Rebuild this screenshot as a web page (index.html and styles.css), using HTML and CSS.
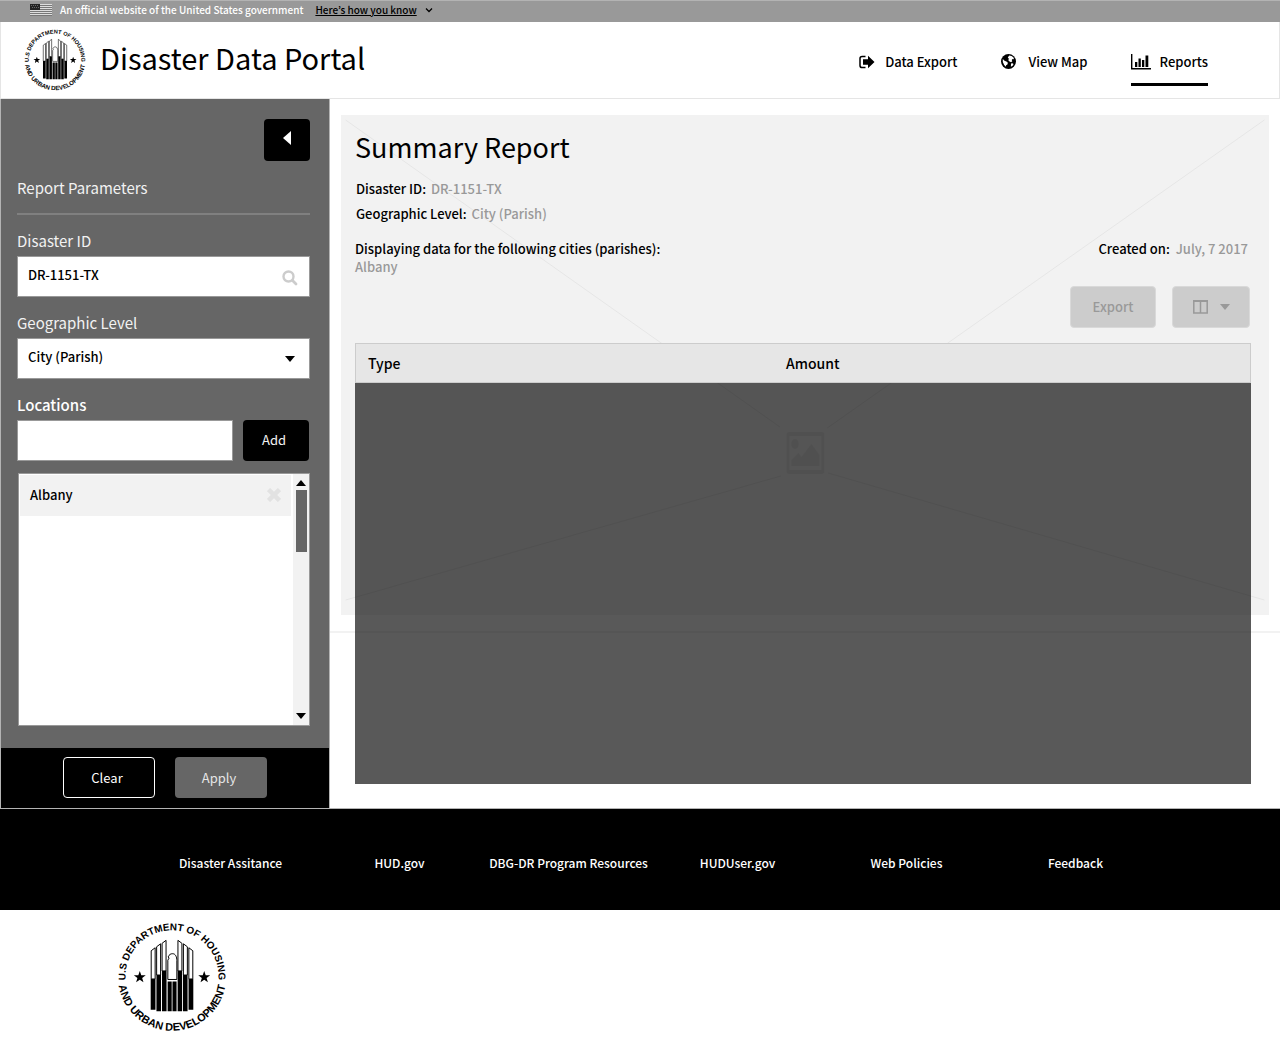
FILE: index.html
```html
<!DOCTYPE html>
<html lang="en">
<head>
<meta charset="utf-8">
<meta name="viewport" content="width=device-width, initial-scale=1">
<title>Disaster Data Portal</title>
<link rel="stylesheet" href="styles.css">
</head>
<body>
<svg class="defs" aria-hidden="true">
  <defs>
    <path id="arc-top" d="M17.500 82.500A47 47 0 1 1 93.500 82.500"/>
    <path id="arc-bottom" d="M13.500 20A54.500 54.500 0 1 0 97.500 20"/>
    <symbol id="seal" viewBox="0 0 111 110">
      <g class="seal-text">
        <text><textPath href="#arc-top" startOffset="50%">U.S DEPARTMENT OF HOUSING</textPath></text>
        <text class="lower"><textPath href="#arc-bottom" startOffset="50%">AND URBAN DEVELOPMENT</textPath></text>
      </g>
      <g fill="#fff" stroke="#000" stroke-width="1">
        <path d="M34.500 57V28.500l4-3V57zM40 53V24.500l4-3V53zM45.500 49V21l4-3V49z"/>
        <path d="M76.500 57V28.500l-4-3V57zM71 53V24.500l-4-3V53zM65.500 49V21l-4-3V49z"/>
        <path d="M51.300 57.500V38l1.200-2-.8-1.300c1-2.500 2.500-3.200 4.500-3.200 2.700 0 4.200 3 4.200 7v19z"/>
      </g>
      <path d="M34 57h4.800v31H34zM39.800 53h4.600v36.500h-4.600zM45.400 48.800h4.600v40.700h-4.600zM51.100 59.500h4.100v30h-4.100zM56 59.500h4.100v30H56zM61.200 48.800h4.500v40.700h-4.500zM66.600 53h4.600v36.500h-4.600zM72.200 57H77v31h-4.800z"/>
      <path d="M23 49l1.500 4.200 4.500.1-3.600 2.700 1.300 4.300L23 57.800l-3.700 2.500 1.300-4.300-3.600-2.700 4.500-.1zM88 49l1.500 4.200 4.500.1-3.600 2.700 1.300 4.300-3.700-2.500-3.700 2.500 1.300-4.300-3.600-2.700 4.500-.1z"/>
    </symbol>
  </defs>
</svg>

<div class="banner">
  <svg class="flag" viewBox="0 0 22 12" aria-hidden="true">
    <path fill="#ddd" d="M0 0h22v12H0z"/>
    <path fill="#777" d="M0 1h22v1H0zM0 3h22v1H0zM0 5h22v1H0zM0 7h22v1H0zM0 9h22v1H0zM0 11h22v1H0z"/>
    <path fill="#222" d="M0 0h10v6H0z"/>
    <path stroke="#666" stroke-dasharray="1 1" d="M1 1.500h8M2 3.500h8"/>
  </svg>
  <span>An official website of the United States government</span>
  <a href="#know">Here’s how you know</a>
  <svg class="chev" viewBox="0 0 8 6" aria-hidden="true"><path fill="none" stroke="#000" stroke-width="1.300" d="M1 1.500l3 3 3-3"/></svg>
</div>

<header class="header">
  <a class="brand" href="#home">
    <svg class="seal-small" role="img" aria-label="HUD seal"><use href="#seal"/></svg>
    <span>Disaster Data Portal</span>
  </a>
  <nav class="nav" aria-label="Main">
    <a href="#export">
      <svg width="17" height="16" viewBox="0 0 17 16" aria-hidden="true"><path fill="none" stroke="#000" stroke-width="1.500" d="M6.500 2.500H3.200C1.800 2.500 1 3.300 1 4.600v6.800c0 1.300.8 2.100 2.200 2.100h3.300"/><path d="M4 5.200h5V1.700L15.500 8 9 14.300v-3.500H4z"/></svg>
      Data Export</a>
    <a href="#map">
      <svg width="19" height="16" viewBox="0 0 19 16" aria-hidden="true"><circle cx="7.500" cy="7.500" r="7.500"/><path fill="#fff" d="M8.200 1.500l2.300.5 1.800 1.300.8 2-1.500-.3-.9 1 .6 1.300-1.200.9-1.600-.7-1.200-1.200.6-1.600-1.100-1.200zM1.800 5l1.700 1.800 1.900.6 1.500 1.400-.5 1.600-1.300.8-.2 1.500-1.700-1.600L1.800 8zM10 9.500l1.500-.3 1 .8-.6 1.500-2 1.200z"/></svg>
      View Map</a>
    <a class="current" href="#reports" aria-current="page">
      <svg width="20" height="16" viewBox="0 0 20 16" aria-hidden="true"><path d="M0 0h1.400v14H20v1.400H0zM4 8h2.300v5H4zM7.500 4.500h2.300V13H7.500zM11 6h2.300v7H11zM14.500 1.500h2.800V13h-2.800z"/></svg>
      Reports</a>
  </nav>
</header>

<main class="main">
  <form class="sidebar">
    <div class="params">
      <button class="collapse" type="button" aria-label="Collapse panel"><svg viewBox="0 0 8 14" width="8" height="14"><path fill="#fff" d="M8 0v14L0 7z"/></svg></button>
      <h2>Report Parameters</h2>
      <label for="disaster">Disaster ID</label>
      <div class="field">
        <input id="disaster" type="text" value="DR-1151-TX">
        <svg class="search" viewBox="0 0 16 16" aria-hidden="true"><circle cx="6.500" cy="6.500" r="5" fill="none" stroke="#ccc" stroke-width="2.400"/><path stroke="#ccc" stroke-width="2.800" stroke-linecap="round" d="M10.500 10.500l3.500 3.500"/></svg>
      </div>
      <label for="level">Geographic Level</label>
      <div class="field">
        <select id="level"><option>City (Parish)</option></select>
        <svg class="caret" viewBox="0 0 10 6" aria-hidden="true"><path d="M0 0h10L5 6z"/></svg>
      </div>
      <label class="strong" for="location">Locations</label>
      <div class="add-row">
        <input id="location" type="text">
        <button type="button" class="add">Add</button>
      </div>
      <div class="list">
        <ul>
          <li>Albany
            <button type="button" aria-label="Remove Albany"><svg viewBox="0 0 14 14" width="14" height="14"><path stroke="#e2e2e2" stroke-width="4.500" d="M1.500 1.500l11 11M12.500 1.500l-11 11"/></svg></button>
          </li>
        </ul>
        <div class="scroll" aria-hidden="true">
          <svg viewBox="0 0 10 6"><path d="M0 6h10L5 0z"/></svg>
          <div class="thumb"></div>
          <svg viewBox="0 0 10 6"><path d="M0 0h10L5 6z"/></svg>
        </div>
      </div>
    </div>
    <div class="actions">
      <button type="reset" class="clear">Clear</button>
      <button type="button" class="apply">Apply</button>
    </div>
  </form>

  <section class="report">
    <div class="backdrop" aria-hidden="true">
      <svg>
        <g stroke="#e6e6e6" stroke-width="1">
          <line x1=".5%" y1="1%" x2="47.300%" y2="62.400%"/>
          <line x1="99.500%" y1="1%" x2="52.400%" y2="62.600%"/>
          <line x1=".5%" y1="97%" x2="47.400%" y2="72.200%"/>
          <line x1="99.500%" y1="97%" x2="52.500%" y2="71.600%"/>
        </g>
        <svg x="48%" y="317" width="38" height="42" viewBox="0 0 38 42">
          <path fill="#e6e6e6" fill-rule="evenodd" d="M3 0h32q3 0 3 3v36q0 3-3 3H3q-3 0-3-3V3q0-3 3-3zM3 4v34h32V4z"/>
          <ellipse fill="#e6e6e6" cx="8.500" cy="12" rx="3.700" ry="5"/>
          <path fill="#e6e6e6" d="M5 34v-6l7-7 3 4 10-13 8 11v11z"/>
        </svg>
      </svg>
    </div>
    <div class="content">
      <h1>Summary Report</h1>
      <p class="meta">Disaster ID: <span>DR-1151-TX</span></p>
      <p class="meta">Geographic Level: <span>City (Parish)</span></p>
      <div class="info">
        <p>Displaying data for the following cities (parishes):<br><span>Albany</span></p>
        <p class="created">Created on: <span>July, 7 2017</span></p>
      </div>
      <div class="tools">
        <button type="button">Export</button>
        <button type="button" class="columns" aria-label="Choose columns">
          <svg viewBox="0 0 15 14" width="15" height="14"><path fill="none" stroke="#999" stroke-width="1.500" d="M.8 1h13.400v12H.8zM7.500 1v12"/><path stroke="#999" stroke-width="2" d="M0 1h15"/></svg>
          <svg viewBox="0 0 10 6" width="10" height="6"><path fill="#999" d="M0 0h10L5 6z"/></svg>
        </button>
      </div>
      <table>
        <thead><tr><th scope="col">Type</th><th scope="col">Amount</th></tr></thead>
        <tbody><tr><td></td><td></td></tr></tbody>
      </table>
    </div>
  </section>
</main>

<footer>
  <nav class="links" aria-label="Footer">
    <a href="#assistance">Disaster Assitance</a>
    <a href="#hud">HUD.gov</a>
    <a href="#resources">DBG-DR Program Resources</a>
    <a href="#huduser">HUDUser.gov</a>
    <a href="#policies">Web Policies</a>
    <a href="#feedback">Feedback</a>
  </nav>
  <div class="foot">
    <svg class="seal-large" role="img" aria-label="HUD seal"><use href="#seal"/></svg>
  </div>
</footer>
</body>
</html>
```
FILE: styles.css
```css
* { box-sizing: border-box; }
body, h1, h2, p, ul { margin: 0; padding: 0; }
body {
  background: #fff;
  color: #000;
  font: 500 13px/18px "Noto Sans CJK JP", "Noto Sans", sans-serif;
}
a { color: inherit; text-decoration: none; }
button, input, select { font: inherit; color: inherit; border-radius: 0; margin: 0; }
button { display: flex; align-items: center; justify-content: center; border: 0; border-radius: 4px; padding: 0; }
.defs { position: absolute; width: 0; height: 0; }
.seal-text { font: bold 10px "Liberation Sans", sans-serif; text-anchor: middle; }
.seal-text .lower { font-size: 11px; }

.banner {
  display: flex;
  align-items: center;
  height: 22px;
  padding: 0 30px 4px;
  background: #999;
  border-top: 1px solid #b3b3b3;
  color: #fff;
  font-size: 10px;
}
.flag { width: 22px; height: 12px; margin-right: 8px; }
.banner a { margin: 0 8px 0 12px; color: #000; text-decoration: underline; }
.chev { width: 8px; height: 6px; }

.header {
  display: flex;
  justify-content: space-between;
  align-items: center;
  height: 77px;
  padding: 0 71px 0 23px;
  border: 1px solid #e5e5e5;
  border-top: 0;
}
.brand { display: flex; align-items: center; gap: 14px; font-size: 29px; font-weight: 400; line-height: 40px; }
.brand span { padding-bottom: 6px; }
.seal-small { width: 62px; height: 62px; }
.nav { display: flex; gap: 43px; padding-top: 15px; }
.nav a { display: flex; align-items: center; gap: 9px; height: 36px; border-bottom: 3px solid transparent; padding-bottom: 9px; }
.nav .current { border-color: #000; }

.main { display: grid; grid-template-columns: 330px 1fr; }
.sidebar { display: flex; flex-direction: column; background: #666; border: solid #b3b3b3; border-width: 0 1px; }
.params { flex: 1; padding: 20px 19px 22px 16px; color: #f2f2f2; }
.collapse { width: 46px; height: 42px; margin-left: auto; padding-bottom: 4px; background: #000; }
.params h2 { height: 54px; padding-top: 15px; border-bottom: 2px solid #808080; font-size: 15px; font-weight: 400; line-height: 24px; }
.params label { display: block; height: 41px; padding-top: 14px; font-size: 15px; font-weight: 400; line-height: 24px; }
.params label.strong { font-weight: 500; color: #fff; }
.field { position: relative; }
.params input, .params select {
  display: block;
  width: 100%;
  height: 41px;
  padding: 0 10px 4px;
  background: #fff;
  border: 1px solid #999;
  color: #000;
  appearance: none;
}
.search, .caret { position: absolute; right: 12px; top: 14px; width: 16px; height: 16px; }
.caret { right: 15px; top: 18px; width: 10px; height: 6px; }
.add-row { display: grid; grid-template-columns: 1fr 66px; gap: 10px; margin-right: 1px; }
.add { padding: 0 4px 2px 0; background: #000; font-weight: 400; }
.list { display: grid; grid-template-columns: 1fr 16px; height: 253px; margin-top: 12px; margin-left: 1px; background: #fff; border: 1px solid #999; color: #000; }
.list ul { list-style: none; padding: 1px 2px 0 1px; }
.list li { display: flex; justify-content: space-between; align-items: center; height: 41px; padding: 0 10px 2px; background: #f2f2f2; }
.list li button { background: none; }
.scroll { display: flex; flex-direction: column; align-items: center; gap: 4px; padding: 6px 0; background: #f2f2f2; }
.scroll svg { width: 10px; height: 6px; }
.scroll svg:last-child { margin-top: auto; }
.thumb { width: 11px; height: 62px; background: #666; }
.actions { display: flex; justify-content: center; gap: 20px; height: 60px; padding-top: 9px; background: #000; color: #fff; }
.actions button { width: 92px; height: 41px; padding-right: 4px; font-weight: 400; }
.clear { background: #000; border: 1px solid #fff; }
.apply { background: #666; color: #e5e5e5; }

.report { position: relative; }
.backdrop { position: absolute; top: 0; left: 0; right: 0; height: 534px; padding: 16px 11px 17px; border-bottom: 2px solid #f2f2f2; }
.backdrop > svg { display: block; width: 100%; height: 500px; background: #f2f2f2; }
.content { position: relative; padding: 28px 29px 24px 25px; }
.content span { color: #999; }
h1 { margin-bottom: 9px; font-size: 27px; font-weight: 400; line-height: 40px; }
.meta { padding-left: 1px; line-height: 25px; }
.meta span { margin-left: 2px; }
.info { display: flex; justify-content: space-between; padding: 14px 3px 10px 0; }
.created span { margin-left: 3px; }
.tools { display: flex; justify-content: flex-end; gap: 16px; padding: 0 1px 15px 0; }
.tools button { width: 86px; height: 42px; background: #ccc; border: 1px solid #d9d9d9; color: #999; }
.tools .columns { width: 78px; gap: 12px; }
table { width: 100%; border-collapse: separate; border-spacing: 0; }
th { width: 418px; height: 40px; padding: 0 12px; background: #e6e6e6; border: 1px solid #ccc; border-width: 1px 0; font-size: 14px; font-weight: 500; text-align: left; }
th:first-child { width: 431px; border-left-width: 1px; }
th:last-child { width: auto; padding-left: 0; border-right-width: 1px; }
td { height: 401px; padding: 0; background: rgba(0, 0, 0, .65); }

.links {
  display: grid;
  grid-template-columns: repeat(6, 1fr);
  align-items: center;
  height: 102px;
  padding: 6px 120px 0 146px;
  background: #000;
  border-top: 1px solid #b3b3b3;
  color: #fff;
  font-size: 12px;
  text-align: center;
  white-space: nowrap;
}
.foot { padding: 12px 117px 25px; }
.seal-large { display: block; width: 110px; height: 110px; }
```
